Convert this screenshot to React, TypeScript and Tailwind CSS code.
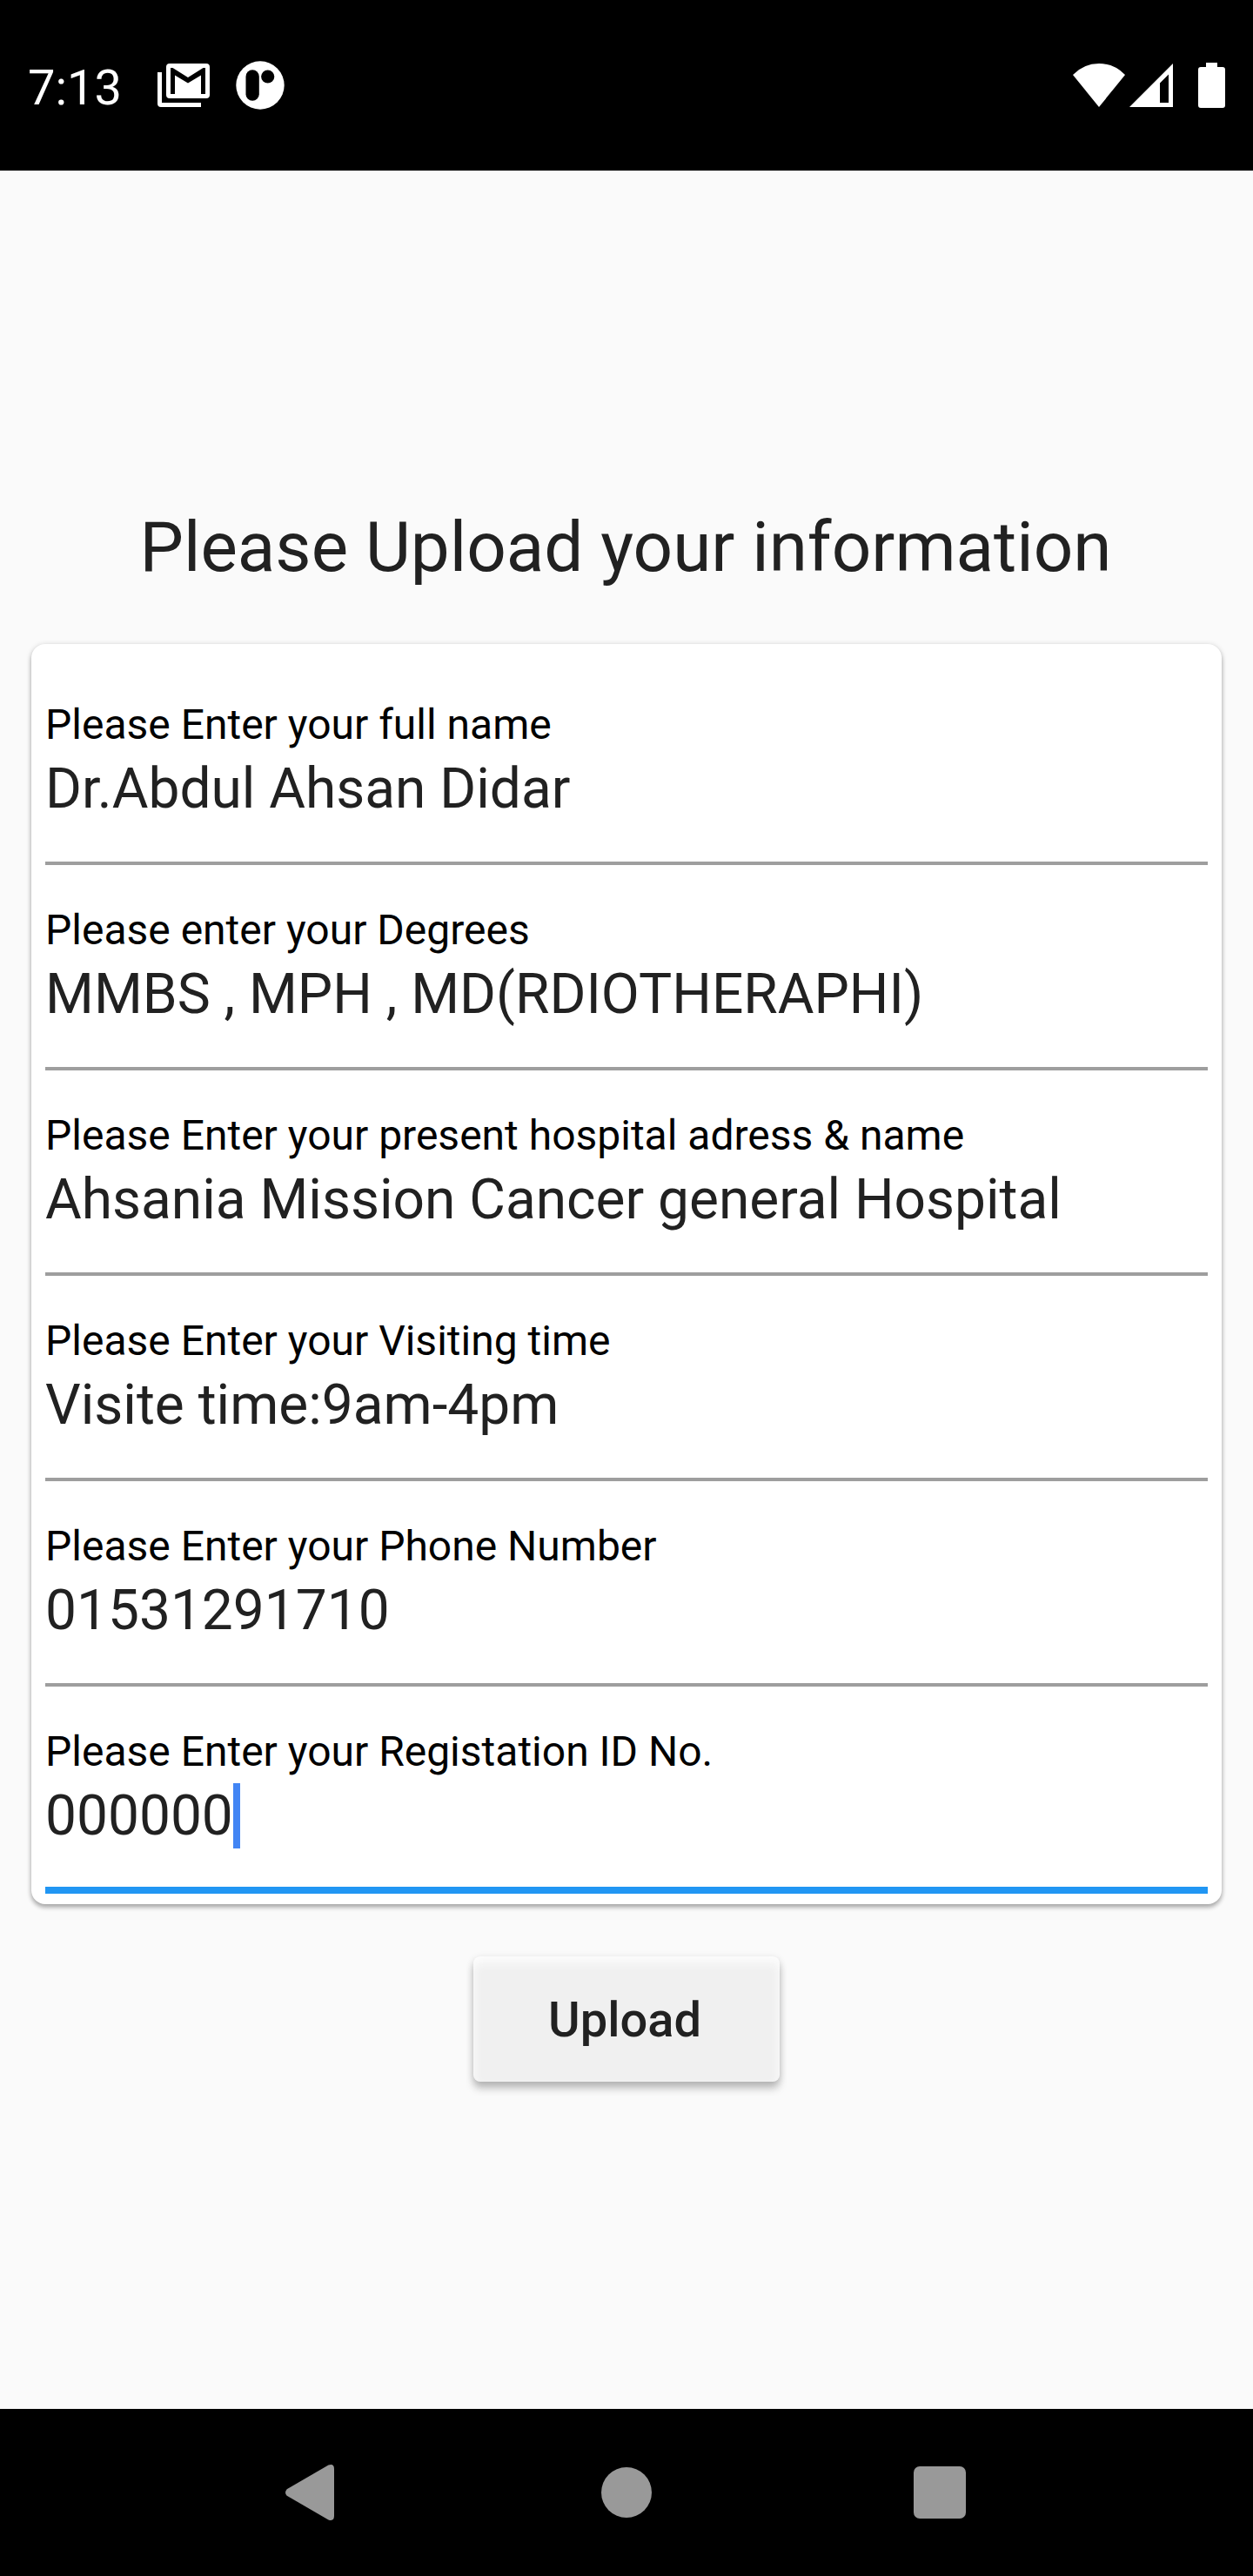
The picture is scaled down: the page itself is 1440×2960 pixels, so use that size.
const fields = [
  { label: "Please Enter your full name", value: "Dr.Abdul Ahsan Didar" },
  { label: "Please enter your Degrees", value: "MMBS , MPH , MD(RDIOTHERAPHI)" },
  { label: "Please Enter your present hospital adress & name", value: "Ahsania Mission Cancer general Hospital" },
  { label: "Please Enter your Visiting time", value: "Visite time:9am-4pm" },
  { label: "Please Enter your Phone Number", value: "01531291710" },
  { label: "Please Enter your Registation ID No.", value: "000000", focused: true },
];

function StatusBar() {
  return (
    <header className="flex h-[196px] items-start bg-black text-white">
      <span className="ml-8 mt-[68px] w-[106px] whitespace-nowrap text-[56px] leading-[66px]">7:13</span>
      <svg className="ml-[43px] mt-[73px] h-[50px] w-[60px]" viewBox="0 0 60 50" fill="currentColor">
        <path fillRule="evenodd" d="M14 0H56a4 4 0 0 1 4 4V36a4 4 0 0 1-4 4H14a4 4 0 0 1-4-4V4a4 4 0 0 1 4-4ZM15 5V35H20V13.500L35 22.500L50 13.500V35H55V5H52.500L35 16L17.500 5Z" />
        <path d="M0 10H5V45H50V50H4a4 4 0 0 1-4-4Z" />
      </svg>
      <svg className="ml-[30px] mt-[70px] h-14 w-14" viewBox="0 0 56 56">
        <circle cx="28" cy="28" r="27.700" fill="currentColor" />
        <rect x="11.500" y="10.300" width="15.300" height="35.500" rx="7.650" fill="#000" />
        <circle cx="36.700" cy="18" r="7.600" fill="#000" />
      </svg>
      <svg className="ml-auto mt-[73px] h-[50px] w-[60px]" viewBox="0 0 60 50" fill="currentColor">
        <path d="M30 50L0 13Q12.500 0 30 0T60 13Z" />
      </svg>
      <svg className="ml-[5px] mt-[73px] h-[50px] w-[50px]" viewBox="0 0 50 50" fill="currentColor">
        <path fillRule="evenodd" d="M50 0V50H0ZM45 12.500L35 22.500V45H45Z" />
      </svg>
      <svg className="ml-[29px] mr-8 mt-[72px] h-[52px] w-[31px]" viewBox="0 0 31 52" fill="currentColor">
        <path d="M9 0H22V5H28a3 3 0 0 1 3 3V49a3 3 0 0 1-3 3H3a3 3 0 0 1-3-3V8a3 3 0 0 1 3-3H9Z" />
      </svg>
    </header>
  );
}

function Field({ label, value, focused }: { label: string; value: string; focused?: boolean }) {
  return (
    <div
      className={
        focused
          ? "h-[238px] border-b-8 border-[#2196f3] pt-[45px]"
          : "h-[236px] border-b-4 border-[#9e9e9e] pt-[45px]"
      }
    >
      <div className="whitespace-nowrap text-[48px] leading-[60px] text-black">{label}</div>
      <div className="mt-1.5 flex items-start whitespace-nowrap text-[64px] leading-[75px]">
        <span>{value}</span>
        {focused && <span className="h-[75px] w-2 bg-[#4285f4]" />}
      </div>
    </div>
  );
}

function NavBar() {
  return (
    <nav className="flex h-48 items-center bg-black text-[#999999]">
      <svg className="ml-[328px] h-16 w-14" viewBox="0 0 56 64" fill="currentColor">
        <path d="M1.700 28.200L49.500 .6Q56-1.500 56 5V59Q56 65.500 49.500 63.400L1.700 35.800Q-1.700 32 1.700 28.200Z" />
      </svg>
      <div className="ml-[307px] h-[58px] w-[58px] rounded-full bg-[#999999]" />
      <div className="ml-[301px] h-[60px] w-[60px] rounded-[7px] bg-[#999999]" />
    </nav>
  );
}

export default function App() {
  return (
    <div className="flex h-[2960px] w-[1440px] flex-col bg-[#fafafa] font-['Roboto',sans-serif] text-[#212121]">
      <StatusBar />
      <main className="flex flex-1 flex-col items-center pt-[385px]">
        <h1 className="mr-0.5 whitespace-nowrap text-[80px] leading-[96px]">Please Upload your information</h1>
        <section className="mt-[63px] h-[1448px] w-[1368px] rounded-2xl bg-white px-4 pb-3 pt-[18px] shadow-[0_4px_5px_rgba(0,0,0,0.24),0_1px_6px_rgba(0,0,0,0.18)]">
          {fields.map((f) => (
            <Field key={f.label} {...f} />
          ))}
        </section>
        <button className="mt-[60px] flex h-36 w-[352px] items-center justify-center rounded-lg bg-[#f0f0f0] pr-1 pt-0.5 text-[56px] font-medium leading-[66px] shadow-[inset_0_7px_12px_#fdfdfd,0_8px_10px_rgba(0,0,0,0.22),0_2px_8px_rgba(0,0,0,0.12)]">
          Upload
        </button>
      </main>
      <NavBar />
    </div>
  );
}
